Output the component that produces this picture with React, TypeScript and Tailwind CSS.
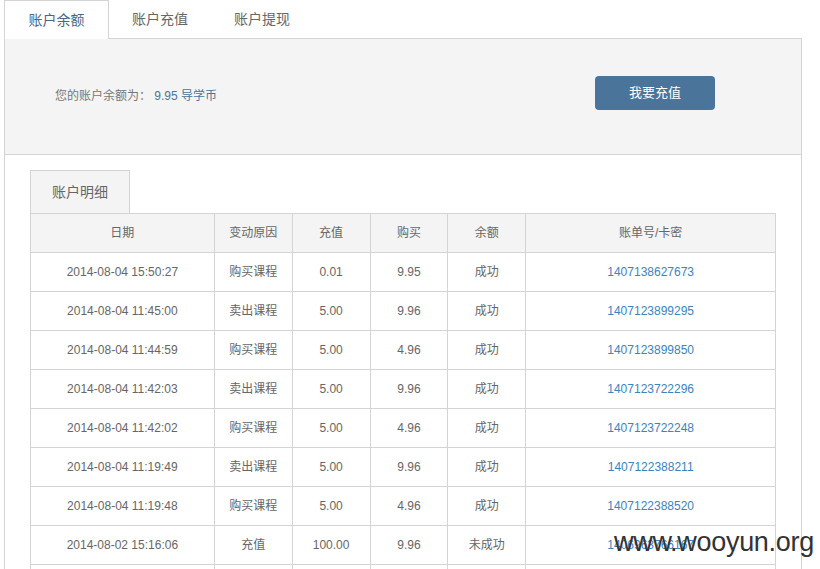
import React from 'react';

const rows = [
  ['2014-08-04 15:50:27', '购买课程', '0.01', '9.95', '成功', '1407138627673'],
  ['2014-08-04 11:45:00', '卖出课程', '5.00', '9.96', '成功', '1407123899295'],
  ['2014-08-04 11:44:59', '购买课程', '5.00', '4.96', '成功', '1407123899850'],
  ['2014-08-04 11:42:03', '卖出课程', '5.00', '9.96', '成功', '1407123722296'],
  ['2014-08-04 11:42:02', '购买课程', '5.00', '4.96', '成功', '1407123722248'],
  ['2014-08-04 11:19:49', '卖出课程', '5.00', '9.96', '成功', '1407122388211'],
  ['2014-08-04 11:19:48', '购买课程', '5.00', '4.96', '成功', '1407122388520'],
  ['2014-08-02 15:16:06', '充值', '100.00', '9.96', '未成功', '1406963766167'],
  ['2014-08-02 15:10:41', '充值', '100.00', '9.96', '未成功', '1406963441125'],
];

const headers = ['日期', '变动原因', '充值', '购买', '余额', '账单号/卡密'];
const widths = ['w-[184px]', 'w-[78px]', 'w-[78px]', 'w-[78px]', 'w-[78px]', 'w-[250px]'];

const App: React.FC = () => {
  return (
    <div className="relative w-[820px] h-[569px] overflow-hidden bg-white text-[#666] font-['Liberation_Sans','Noto_Sans_CJK_SC',sans-serif]">
      {/* Top tabs */}
      <div className="flex pl-[4px] h-[39px] text-[14px]">
        <div className="w-[105px] h-[39px] flex items-center justify-center border border-b-0 border-[#d4d4d4] bg-white text-[#4b6584] relative z-10">
          账户余额
        </div>
        <div className="w-[102px] flex items-center justify-center">账户充值</div>
        <div className="w-[102px] flex items-center justify-center">账户提现</div>
      </div>

      {/* Panel */}
      <div className="ml-[4px] w-[798px] -mt-px border border-[#d4d4d4]">
        <div className="h-[116px] bg-[#f4f4f4] border-b border-[#d4d4d4] flex items-center pl-[50px] pr-[86px] justify-between">
          <div className="text-[12px] text-[#777] mt-[-2px]">
            您的账户余额为： <span className="text-[#4a7499]">9.95 导学币</span>
          </div>
          <button className="w-[120px] h-[34px] rounded-[4px] bg-[#4a7499] text-white text-[13px] mt-[-7px]">
            我要充值
          </button>
        </div>

        <div className="pt-[15px] px-[25px] pb-[20px]">
          <div className="w-[100px] h-[43px] bg-[#f4f4f4] border border-b-0 border-[#d4d4d4] flex items-center justify-center text-[14px] text-[#666]">
            账户明细
          </div>
          <table className="w-[746px] border-collapse text-[12px] text-center">
            <thead>
              <tr className="bg-[#f4f4f4]">
                {headers.map((h, i) => (
                  <th key={h} className={`${widths[i]} h-[39px] border border-[#d4d4d4] font-normal text-[#666]`}>
                    {h}
                  </th>
                ))}
              </tr>
            </thead>
            <tbody>
              {rows.map((r) => (
                <tr key={r[5]}>
                  {r.map((c, i) => (
                    <td
                      key={i}
                      className={`h-[39px] border border-[#d4d4d4] ${i === 5 ? 'text-[#3a84c0]' : 'text-[#666]'}`}
                    >
                      {c}
                    </td>
                  ))}
                </tr>
              ))}
            </tbody>
          </table>
        </div>
      </div>

      {/* Watermark */}
      <div className="absolute left-[614px] top-[522px] text-[27px] text-[#333] font-['Liberation_Sans',sans-serif] tracking-[-0.3px]">
        www.wooyun.org
      </div>
    </div>
  );
};

export default App;
